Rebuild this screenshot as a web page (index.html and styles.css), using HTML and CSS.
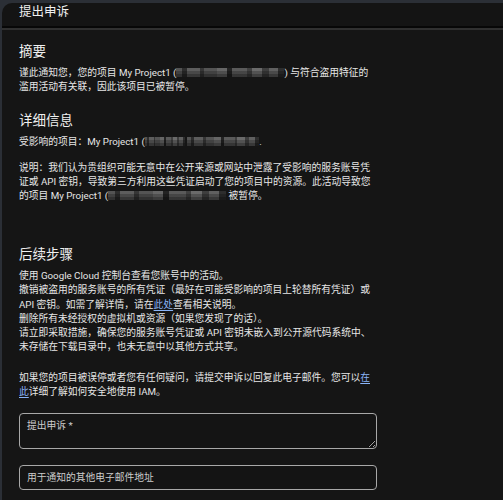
FILE: index.html
```html
<!DOCTYPE html>
<html lang="zh-CN">
<head>
<meta charset="utf-8">
<title>提出申诉</title>
<link rel="stylesheet" href="styles.css">
</head>
<body>
<div class="panel">
  <header class="panel-header">
    <h1>提出申诉</h1>
  </header>
  <main class="panel-body">
    <h2 class="section-title">摘要</h2>
    <p class="text summary">谨此通知您，您的项目 My Project1 (<span class="redact redact-summary"></span>) 与符合盗用特征的滥用活动有关联，因此该项目已被暂停。</p>

    <h2 class="section-title details-title">详细信息</h2>
    <p class="text affected">受影响的项目：My Project1 (<span class="redact redact-short"></span> <span class="redact redact-id"></span>.</p>
    <p class="text note">说明：我们认为贵组织可能无意中在公开来源或网站中泄露了受影响的服务账号凭证或 API 密钥，导致第三方利用这些凭证启动了您的项目中的资源。此活动导致您的项目 My Project1 (<span class="redact redact-note"></span> 被暂停。</p>

    <h2 class="section-title steps-title">后续步骤</h2>
    <ul class="text steps">
      <li>使用 Google Cloud 控制台查看您账号中的活动。</li>
      <li>撤销被盗用的服务账号的所有凭证（最好在可能受影响的项目上轮替所有凭证）或 API 密钥。如需了解详情，请在<a href="#" class="link">此处</a>查看相关说明。</li>
      <li>删除所有未经授权的虚拟机或资源（如果您发现了的话）。</li>
      <li>请立即采取措施，确保您的服务账号凭证或 API 密钥未嵌入到公开源代码系统中、未存储在下载目录中，也未无意中以其他方式共享。</li>
    </ul>
    <p class="text contact">如果您的项目被误停或者您有任何疑问，请提交申诉以回复此电子邮件。您可以<a href="#" class="link">在此</a>详细了解如何安全地使用 IAM。</p>

    <form class="appeal-form">
      <textarea class="field field-area" placeholder="提出申诉 *"></textarea>
      <input class="field field-input" type="email" placeholder="用于通知的其他电子邮件地址">
    </form>
  </main>
</div>
</body>
</html>
```
FILE: styles.css
```css
html,
body {
  margin: 0;
  height: 100%;
}

body {
  box-sizing: border-box;
  padding: 3px 0 0 2px;
  background: #2b2f36;
  color: #e2e2e2;
  font-family: Roboto, "Noto Sans CJK SC", sans-serif;
  overflow: hidden;
}

.panel {
  height: 100%;
  background: #141414;
  border-top-left-radius: 10px;
  display: flex;
  flex-direction: column;
}

/* title bar */
.panel-header {
  box-sizing: border-box;
  height: 25px;
  padding: 2px 17px 0;
  border-bottom: 2px solid #070707;
}

.panel-header h1 {
  margin: 0;
  font-size: 12.5px;
  line-height: 14px;
  font-weight: 400;
  color: #f0f0f0;
}

.panel-body {
  border-top: 2px solid #303030;
  background: #151515;
  flex: 1;
  padding: 12px 0 0 17px;
}

.section-title {
  margin: 0;
  font-size: 13.5px;
  line-height: 18px;
  font-weight: 400;
  color: #f0f0f0;
}

.details-title {
  margin-top: 17px;
}

.steps-title {
  margin-top: 42px;
}

.text {
  width: 358px;
  margin: 6px 0 0;
  font-size: 9.75px;
  line-height: 14.2px;
  color: #e6e6e6;
}

.note {
  margin-top: 11px;
}

.steps {
  list-style: none;
  padding: 0;
}

.contact {
  margin-top: 16.5px;
}

.link {
  color: #8ab4f8;
  text-decoration: underline;
  text-underline-offset: 2px;
}

/* pixelated redaction blocks */
.redact {
  display: inline-block;
  height: 9px;
  vertical-align: -1px;
  filter: blur(0.5px);
  background-image:
    linear-gradient(90deg,
      #8a8a8a 0 6%, #4a4a4a 6% 10%, #9a9a9a 10% 22%, #5a5a5a 22% 26%,
      #8b8b8b 26% 38%, #a8a8a8 38% 47%, #3a3a3a 47% 52%, #959595 52% 66%,
      #6a6a6a 66% 70%, #b0b0b0 70% 80%, #666 80% 86%, #9f9f9f 86% 94%, #4b4b4b 94% 100%),
    linear-gradient(180deg, #9a9a9a 0 33%, #777 33% 66%, #5a5a5a 66% 100%);
  background-blend-mode: multiply;
}

.redact-summary {
  width: 108px;
}

.redact-short {
  width: 40px;
}

.redact-id {
  width: 72px;
}

.redact-note {
  width: 118px;
}

/* appeal form */
.appeal-form {
  display: flex;
  flex-direction: column;
  gap: 16px;
  margin-top: 14px;
  width: 358px;
}

.field {
  box-sizing: border-box;
  width: 100%;
  margin: 0;
  border: 1px solid #a8a8a8;
  border-radius: 4px;
  background: #141414;
  color: #e0e0e0;
  font-family: Roboto, "Noto Sans CJK SC", sans-serif;
  font-size: 9.75px;
  line-height: 14.2px;
  color-scheme: dark;
  outline: none;
}

.field::placeholder {
  color: #cccccc;
}

.field-area {
  display: block;
  height: 36px;
  padding: 5px 7px;
  resize: vertical;
}

.field-input {
  height: 25px;
  padding: 0 7px;
}
```
